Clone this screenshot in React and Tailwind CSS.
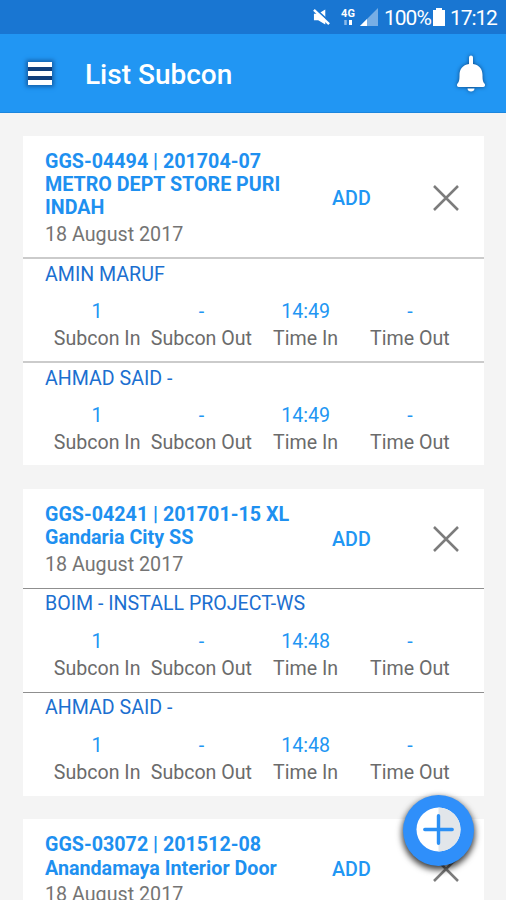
import React from "react";

const jobs = [
  {
    lines: ["GGS-04494 | 201704-07", "METRO DEPT STORE PURI", "INDAH"],
    date: "18 August 2017",
    border: "border-t-2 border-[#cbcbcb]",
    spacing: "pb-[10px]",
    subcons: [
      { name: "AMIN MARUF", in: "1", out: "-", timeIn: "14:49", timeOut: "-" },
      { name: "AHMAD SAID -", in: "1", out: "-", timeIn: "14:49", timeOut: "-" },
    ],
  },
  {
    lines: ["GGS-04241 | 201701-15 XL", "Gandaria City SS"],
    date: "18 August 2017",
    border: "border-t border-[#8f8f8f]",
    spacing: "pb-[11px]",
    subcons: [
      { name: "BOIM - INSTALL PROJECT-WS", in: "1", out: "-", timeIn: "14:48", timeOut: "-" },
      { name: "AHMAD SAID -", in: "1", out: "-", timeIn: "14:48", timeOut: "-" },
    ],
  },
  {
    lines: ["GGS-03072 | 201512-08", "Anandamaya Interior Door"],
    date: "18 August 2017",
    border: "border-t border-[#8f8f8f]",
    spacing: "pb-[11px]",
    subcons: [],
  },
];

function StatusBar() {
  return (
    <div className="h-[34px] shrink-0 bg-[#1976d2] flex items-center justify-end pr-[9px] text-white">
      {/* muted speaker */}
      <svg width="17" height="18" viewBox="0 0 18 18" className="mr-[11px]">
        <path d="M1 5.500h4.500L13 1v16l-7.500-4.500H1z" fill="#fff" />
        <path d="M1 -1 18 14.500" stroke="#1976d2" strokeWidth="2" />
        <path d="M1 1.500 17 16.500" stroke="#fff" strokeWidth="2.500" />
      </svg>
      <div className="w-[14px] mr-[5px] flex flex-col items-center">
        <span className="text-[11px] leading-[10px] font-bold">4G</span>
        <svg width="12" height="6" viewBox="0 0 12 6">
          <path d="M3.500 1v5" stroke="#8bbbea" strokeWidth="2.500" />
          <path d="M8.500 6V1" stroke="#fff" strokeWidth="3" />
        </svg>
      </div>
      <svg width="18" height="18" viewBox="0 0 18 18" className="mr-[6px]">
        <path d="M0 18 18 0v18z" fill="#77aee5" />
        <path d="M0 18 7 11v7z" fill="#fff" />
      </svg>
      <span className="text-[21px] leading-[34px] pt-px w-[46px] mr-[3px] whitespace-nowrap tracking-[-1px]">100%</span>
      <svg width="12" height="18" viewBox="0 0 12 18" className="mr-[5px]">
        <path d="M3 0h6v2h3v16H0V2h3z" fill="#fff" />
      </svg>
      <span className="text-[21px] leading-[34px] pt-px w-[47px] whitespace-nowrap tracking-[-1.1px]">17:12</span>
    </div>
  );
}

function Header() {
  return (
    <header className="h-[79px] shrink-0 bg-[#2196f3] border-b border-[#1b86de] flex items-center pl-[28px] pr-[20px] text-white">
      <button type="button" className="mr-[33px] flex flex-col gap-[4px] bg-[#103f7c] shadow-[0_0_4px_2px_#1462ad]">
        <span className="block w-6 h-[5px] bg-white" />
        <span className="block w-6 h-[5px] bg-white" />
        <span className="block w-6 h-[5px] bg-white" />
      </button>
      <h1 className="flex-1 pt-[4px] text-[28px] font-medium leading-8">List Subcon</h1>
      <svg
        width="30"
        height="38"
        viewBox="0 0 30 38"
        className="mt-[2px] overflow-visible drop-shadow-[0_0_2px_#0c4580]"
      >
        <path
          d="M13 2.500a2 2 0 0 1 4 0V9c6.500 1 9.500 5.500 9.500 11 0 5 .5 7 2 8.500 1.200 1.400.5 3.500-1.500 3.500H3c-2 0-2.700-2.100-1.500-3.500 1.500-1.500 2-3.500 2-8.500 0-5.500 3-10 9.500-11z"
          fill="#fff"
        />
        <path d="M11.500 33.500h7c0 2-1.500 3-3.500 3s-3.500-1-3.500-3z" fill="#fff" />
      </svg>
    </header>
  );
}

function Stat({ value, label }) {
  return (
    <div className="text-center whitespace-nowrap">
      <p className="text-[#2196f3] text-[19.6px] leading-[27px]">{value}</p>
      <p className="text-[#6b6b6b] text-[19.6px] leading-[27px]">{label}</p>
    </div>
  );
}

function SubconRow({ subcon, border }) {
  return (
    <div className={`h-[104px] px-[22px] ${border}`}>
      <p className="h-[39px] pt-[1.5px] text-[#1c6fd0] text-[19.6px] leading-[27px]">{subcon.name}</p>
      <div className="grid grid-cols-4">
        <Stat value={subcon.in} label="Subcon In" />
        <Stat value={subcon.out} label="Subcon Out" />
        <Stat value={subcon.timeIn} label="Time In" />
        <Stat value={subcon.timeOut} label="Time Out" />
      </div>
    </div>
  );
}

function JobCard({ job }) {
  return (
    <section className="bg-white shrink-0">
      <div className={`flex items-center pl-[22px] pr-[25px] pt-[14px] ${job.spacing}`}>
        <div className="w-[287px] whitespace-nowrap">
          {job.lines.map((line) => (
            <p key={line} className="text-[#1e90f0] text-[19.7px] font-bold leading-[23.2px]">
              {line}
            </p>
          ))}
          <p className="mt-[2.5px] text-[#747474] text-[19.7px] leading-[25px]">{job.date}</p>
        </div>
        <button type="button" className="text-[#2196f3] text-[19.7px] font-medium leading-6">
          ADD
        </button>
        <svg width="26" height="26" viewBox="0 0 26 26" className="ml-auto mb-[2px]">
          <path d="M1 1 25 25M25 1 1 25" stroke="#7c7c7c" strokeWidth="2.500" />
        </svg>
      </div>
      {job.subcons.map((s) => (
        <SubconRow key={s.name} subcon={s} border={job.border} />
      ))}
    </section>
  );
}

export default function App() {
  return (
    <div className="relative h-[900px] w-[506px] overflow-hidden bg-[#f4f4f4] flex flex-col font-['Roboto',sans-serif]">
      <StatusBar />
      <Header />
      <main className="flex-1 min-h-0 overflow-hidden flex flex-col gap-[23.7px] pt-[23px] pl-[23px] pr-[22px]">
        {jobs.map((job) => (
          <JobCard key={job.lines[0]} job={job} />
        ))}
      </main>

      {/* floating add button */}
      <button
        type="button"
        className="absolute left-[403px] top-[795px] size-[71px] rounded-full bg-[#2f8ffa] flex items-center justify-center shadow-[0_3px_6px_1px_rgba(0,0,0,0.75)]"
      >
        <svg width="45" height="45" viewBox="0 0 46 46" className="mr-px mb-[2px]">
          <circle cx="23" cy="23" r="22.500" fill="#fff" />
          <path d="M23 .5a22.500 22.500 0 0 1 0 45z" fill="#e2e6ea" />
          <path d="M23 9v28M9 23h28" stroke="#2b90f5" strokeWidth="3.500" strokeLinecap="round" />
        </svg>
      </button>
    </div>
  );
}
